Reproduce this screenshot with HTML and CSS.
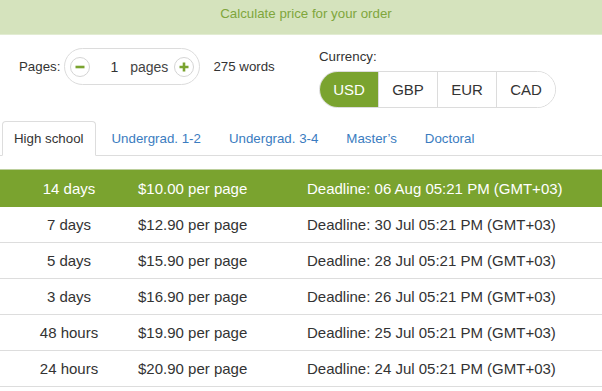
FILE: index.html
```html
<!DOCTYPE html>
<html lang="en">
<head>
    <meta charset="UTF-8">
    <meta name="viewport" content="width=device-width, initial-scale=1.0">
    <title>Calculate price</title>
    <link rel="stylesheet" href="styles.css">
</head>
<body>
    <div class="calc-header">Calculate price for your order</div>

    <div class="controls">
        <div class="pages">
            <span class="pages-label">Pages:</span>
            <div class="stepper">
                <button class="step-btn" aria-label="Less">
                    <svg width="20" height="20" viewBox="0 0 20 20"><circle cx="10" cy="10" r="9.5" fill="#fff" stroke="#d4d4d4"/><path d="M5.5 10h9" stroke="#7aa32f" stroke-width="2.6"/></svg>
                </button>
                <span class="count">1</span>
                <span class="unit">pages</span>
                <button class="step-btn" aria-label="More">
                    <svg width="20" height="20" viewBox="0 0 20 20"><circle cx="10" cy="10" r="9.5" fill="#fff" stroke="#d4d4d4"/><path d="M5.5 10h9M10 5.5v9" stroke="#7aa32f" stroke-width="2.6"/></svg>
                </button>
            </div>
            <span class="words">275 words</span>
        </div>

        <div class="currency">
            <div class="currency-label">Currency:</div>
            <div class="currency-group">
                <button class="cur active">USD</button>
                <button class="cur">GBP</button>
                <button class="cur">EUR</button>
                <button class="cur">CAD</button>
            </div>
        </div>
    </div>

    <ul class="tabs">
        <li class="tab active">High school</li>
        <li class="tab">Undergrad. 1-2</li>
        <li class="tab">Undergrad. 3-4</li>
        <li class="tab">Master’s</li>
        <li class="tab">Doctoral</li>
    </ul>

    <div class="prices">
        <div class="row selected">
            <span class="term">14 days</span>
            <span class="price">$10.00 per page</span>
            <span class="deadline">Deadline: 06 Aug 05:21 PM (GMT+03)</span>
        </div>
        <div class="row">
            <span class="term">7 days</span>
            <span class="price">$12.90 per page</span>
            <span class="deadline">Deadline: 30 Jul 05:21 PM (GMT+03)</span>
        </div>
        <div class="row">
            <span class="term">5 days</span>
            <span class="price">$15.90 per page</span>
            <span class="deadline">Deadline: 28 Jul 05:21 PM (GMT+03)</span>
        </div>
        <div class="row">
            <span class="term">3 days</span>
            <span class="price">$16.90 per page</span>
            <span class="deadline">Deadline: 26 Jul 05:21 PM (GMT+03)</span>
        </div>
        <div class="row">
            <span class="term">48 hours</span>
            <span class="price">$19.90 per page</span>
            <span class="deadline">Deadline: 25 Jul 05:21 PM (GMT+03)</span>
        </div>
        <div class="row">
            <span class="term">24 hours</span>
            <span class="price">$20.90 per page</span>
            <span class="deadline">Deadline: 24 Jul 05:21 PM (GMT+03)</span>
        </div>
    </div>
</body>
</html>
```

FILE: styles.css
```css
* {
    box-sizing: border-box;
}

body {
    margin: 0;
    font-family: "Liberation Sans", Arial, sans-serif;
    font-size: 13.3px;
    color: #333;
    background: #fff;
}

.calc-header {
    height: 35px;
    line-height: 28px;
    padding-left: 10px;
    text-align: center;
    background: #d5e3bd;
    border-bottom: 1px solid #e2ecd2;
    color: #7fa63c;
}

.controls {
    display: flex;
    align-items: flex-start;
    padding: 13px 0 0 19px;
}

.pages {
    display: flex;
    align-items: center;
    width: 300px;
    height: 37px;
}

.stepper {
    display: flex;
    align-items: center;
    height: 37px;
    width: 136px;
    margin-left: 4px;
    padding: 0 5px;
    border: 1px solid #dcdcdc;
    border-radius: 19px;
}

.step-btn {
    width: 20px;
    height: 20px;
    padding: 0;
    border: none;
    background: none;
    cursor: pointer;
    display: flex;
}

.count {
    margin-left: 20px;
    font-size: 14px;
}

.unit {
    margin-left: 12px;
    margin-right: auto;
    color: #444;
    font-size: 14px;
}

.words {
    margin-left: 13px;
}

.currency-label {
    line-height: 18px;
}

.currency-group {
    display: flex;
    margin-top: 5px;
    height: 37px;
    border: 1px solid #dcdcdc;
    border-radius: 19px;
    overflow: hidden;
}

.cur {
    width: 59px;
    border: none;
    border-left: 1px solid #dcdcdc;
    background: #fff;
    color: #333;
    font-family: inherit;
    font-size: 15px;
    padding: 0;
    cursor: pointer;
}

.cur:first-child {
    width: 58px;
    border-left: none;
}

.cur.active {
    background: #7aa32f;
    color: #fff;
}

.tabs {
    display: flex;
    list-style: none;
    margin: 13px 0 0;
    padding: 0 0 0 2px;
    border-bottom: 1px solid #dddddd;
}

.tab {
    height: 35px;
    line-height: 34px;
    padding: 0 12px 0 11px;
    margin-right: 3px;
    margin-bottom: -1px;
    border: 1px solid transparent;
    border-radius: 4px 4px 0 0;
    color: #3a7cc0;
    cursor: pointer;
}

.tab.active {
    color: #333;
    background: #fff;
    border-color: #dddddd;
    border-bottom-color: #fff;
}

.prices {
    margin-top: 13px;
    border-top: 1px solid #bccf9c;
    font-size: 15px;
}

.row {
    display: grid;
    grid-template-columns: 138px 169px 1fr;
    align-items: center;
    height: 36px;
    border-bottom: 1px solid #dddddd;
}

.row.selected {
    height: 37px;
    background: #7aa32f;
    color: #fff;
    border-bottom: none;
}

.term {
    text-align: center;
}
```
